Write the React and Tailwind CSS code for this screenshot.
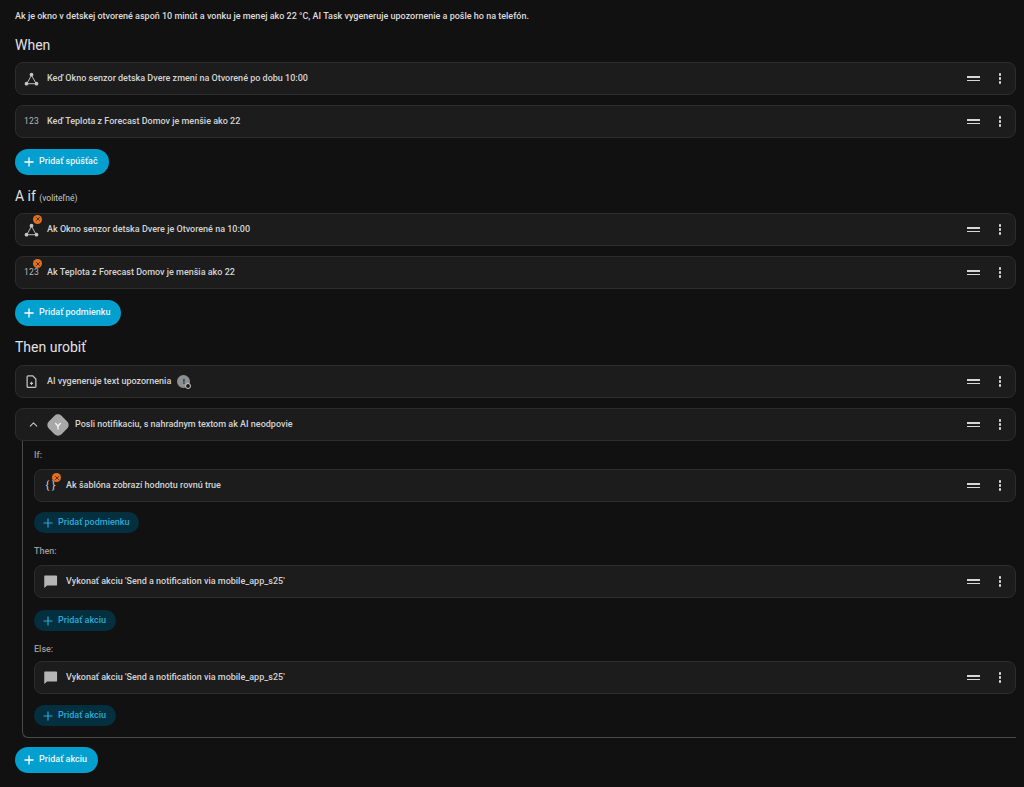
import { ChevronUp, Plus, X } from "lucide-react"

const ICON = "#c4c4c4"

function TriangleIcon() {
  return (
    <svg width="16" height="16" viewBox="0 0 24 24" fill="none" stroke={ICON} strokeWidth="1.5">
      <path d="M12 6 L4.5 19.5 H19.5 Z" />
      <circle cx="12" cy="5" r="3" fill={ICON} stroke="none" />
      <circle cx="4" cy="19.5" r="3" fill={ICON} stroke="none" />
      <circle cx="20" cy="19.5" r="3" fill={ICON} stroke="none" />
    </svg>
  )
}

function NumbersIcon() {
  return <span className="w-[15px] text-center text-[8.5px] tracking-[0.2px] text-[#b8b8b8]">123</span>
}

function FileIcon() {
  return (
    <svg width="15" height="15" viewBox="0 0 24 24" fill="none" stroke={ICON} strokeWidth="2">
      <path d="M6.5 3h7.500l5 5v12a1.500 1.500 0 0 1-1.500 1.500h-11A1.500 1.500 0 0 1 5 20V4.500A1.500 1.500 0 0 1 6.500 3z" />
      <path d="M12 12.500v5M9.500 15h5" strokeWidth="1.7" />
    </svg>
  )
}

function BracesIcon() {
  return <span className="w-[15px] text-center text-[11px] leading-none text-[#c8c8c8]">{"{ }"}</span>
}

function CommentIcon() {
  return (
    <svg width="15" height="15" viewBox="0 0 24 24" fill="#b5b5b5">
      <path d="M3 2.500h18a1.500 1.500 0 0 1 1.500 1.500v13a1.500 1.500 0 0 1-1.500 1.500H6.500L2 22.500V3.500a1 1 0 0 1 1-1z" />
    </svg>
  )
}

function ErrorBadge() {
  return (
    <span className="absolute -right-[3px] -top-[7px] flex h-[9px] w-[9px] items-center justify-center rounded-full bg-[#e2711d]">
      <X size={6} strokeWidth={3} color="#2a1708" />
    </span>
  )
}

function RowActions() {
  return (
    <div className="ml-auto flex items-center">
      <div className="flex w-[13px] flex-col gap-[2px]">
        <div className="h-[1.5px] bg-[#d6d6d6]" />
        <div className="h-[1.5px] bg-[#d6d6d6]" />
      </div>
      <div className="ml-[19px] mr-[14px] flex flex-col items-center gap-[1.5px]">
        <div className="h-[2.5px] w-[2.5px] rounded-full bg-[#dcdcdc]" />
        <div className="h-[2.5px] w-[2.5px] rounded-full bg-[#dcdcdc]" />
        <div className="h-[2.5px] w-[2.5px] rounded-full bg-[#dcdcdc]" />
      </div>
    </div>
  )
}

function Row({ icon, text, badge, extra, className = "" }) {
  return (
    <div className={`flex h-[33px] items-center rounded-[8px] border border-[#2d2d2d] bg-[#1c1c1c] ${className}`}>
      <div className="relative ml-[8px] flex w-[15px] items-center justify-center">
        {icon}
        {badge && <ErrorBadge />}
      </div>
      <span className="ml-[8px] text-[9px] font-medium text-[#d4d4d4]">{text}</span>
      {extra}
      <RowActions />
    </div>
  )
}

function AddButton({ label, className = "" }) {
  return (
    <button className={`flex h-[26px] items-center rounded-full bg-[#039fce] pl-[7px] pr-[11px] text-[9px] font-medium text-[#e8f7fc] ${className}`}>
      <Plus size={14} strokeWidth={2.2} color="#ffffff" />
      <span className="ml-[3px]">{label}</span>
    </button>
  )
}

function SoftButton({ label, className = "" }) {
  return (
    <button className={`flex h-[21px] items-center rounded-full bg-[#032f3f] pl-[7px] pr-[10px] text-[9px] font-medium text-[#2aa9d6] ${className}`}>
      <Plus size={14} strokeWidth={2} color="#2aa9d6" />
      <span className="ml-[3px]">{label}</span>
    </button>
  )
}

function Heading({ children, className = "" }) {
  return <h2 className={`text-[14px] leading-[18px] text-[#e1e1e1] ${className}`}>{children}</h2>
}

function SubLabel({ children, className = "" }) {
  return <div className={`text-[9px] font-medium leading-[11px] text-[#9a9a9a] ${className}`}>{children}</div>
}

export default function App() {
  return (
    <div className="h-[787px] w-[1024px] overflow-hidden bg-[#111111] pl-[15px] pr-[8px] font-['Roboto',sans-serif]">
      <p className="pt-[11px] text-[9px] font-medium leading-[11px] text-[#dcdcdc]">
        Ak je okno v detskej otvorené aspoň 10 minút a vonku je menej ako 22 °C, AI Task vygeneruje upozornenie a pošle ho na telefón.
      </p>

      {/* WHEN */}
      <Heading className="mt-[14px]">When</Heading>
      <Row className="mt-[8px]" icon={<TriangleIcon />} text="Keď Okno senzor detska Dvere zmení na Otvorené po dobu 10:00" />
      <Row className="mt-[10px]" icon={<NumbersIcon />} text="Keď Teplota z Forecast Domov je menšie ako 22" />
      <AddButton className="mt-[11px]" label="Pridať spúšťač" />

      {/* IF */}
      <Heading className="mt-[12px]">
        A if <span className="text-[8.5px] text-[#c8c8c8]">(voliteľné)</span>
      </Heading>
      <Row className="mt-[6px]" icon={<TriangleIcon />} badge text="Ak Okno senzor detska Dvere je Otvorené na 10:00" />
      <Row className="mt-[10px]" icon={<NumbersIcon />} badge text="Ak Teplota z Forecast Domov je menšia ako 22" />
      <AddButton className="mt-[11px]" label="Pridať podmienku" />

      {/* THEN */}
      <Heading className="mt-[12px]">Then urobiť</Heading>
      <Row
        className="mt-[9px]"
        icon={<FileIcon />}
        text="AI vygeneruje text upozornenia"
        extra={
          <span className="relative ml-[6px] flex h-[13px] w-[13px] items-center justify-center rounded-full bg-[#8f8f8f] text-[8px] font-bold text-[#222222]">
            !
            <span className="absolute -bottom-[1px] -right-[1px] h-[6px] w-[6px] rounded-full border border-[#cfcfcf] bg-[#1c1c1c]" />
          </span>
        }
      />

      <div className="mt-[10px] flex h-[33px] items-center rounded-[8px] border border-[#2d2d2d] bg-[#1c1c1c]">
        <ChevronUp className="ml-[11px]" size={13} color="#c4c4c4" strokeWidth={2} />
        <div className="ml-[9px] flex h-[18px] w-[18px] rotate-45 items-center justify-center rounded-[5px] bg-[#a8a8a8]">
          <svg className="-rotate-45" width="13" height="13" viewBox="0 0 24 24" fill="none" stroke="#f2f2f2" strokeWidth="2.5">
            <path d="M7 7l5 6 5-6M12 13v6" />
          </svg>
        </div>
        <span className="ml-[8px] text-[9px] font-medium text-[#d4d4d4]">Posli notifikaciu, s nahradnym textom ak AI neodpovie</span>
        <RowActions />
      </div>

      {/* NESTED BLOCK */}
      <div className="ml-[7px] rounded-bl-[6px] border-b border-l border-[#4a4a4a] pb-[11px] pl-[11px]">
        <SubLabel className="pt-[9px]">If:</SubLabel>
        <Row className="mt-[8px]" icon={<BracesIcon />} badge text="Ak šablóna zobrazí hodnotu rovnú true" />
        <SoftButton className="mt-[10px]" label="Pridať podmienku" />
        <SubLabel className="mt-[13px]">Then:</SubLabel>
        <Row className="mt-[8px]" icon={<CommentIcon />} text="Vykonať akciu 'Send a notification via mobile_app_s25'" />
        <SoftButton className="mt-[12px]" label="Pridať akciu" />
        <SubLabel className="mt-[13px]">Else:</SubLabel>
        <Row className="mt-[6px]" icon={<CommentIcon />} text="Vykonať akciu 'Send a notification via mobile_app_s25'" />
        <SoftButton className="mt-[11px]" label="Pridať akciu" />
      </div>

      <AddButton className="mt-[9px]" label="Pridať akciu" />
    </div>
  )
}
